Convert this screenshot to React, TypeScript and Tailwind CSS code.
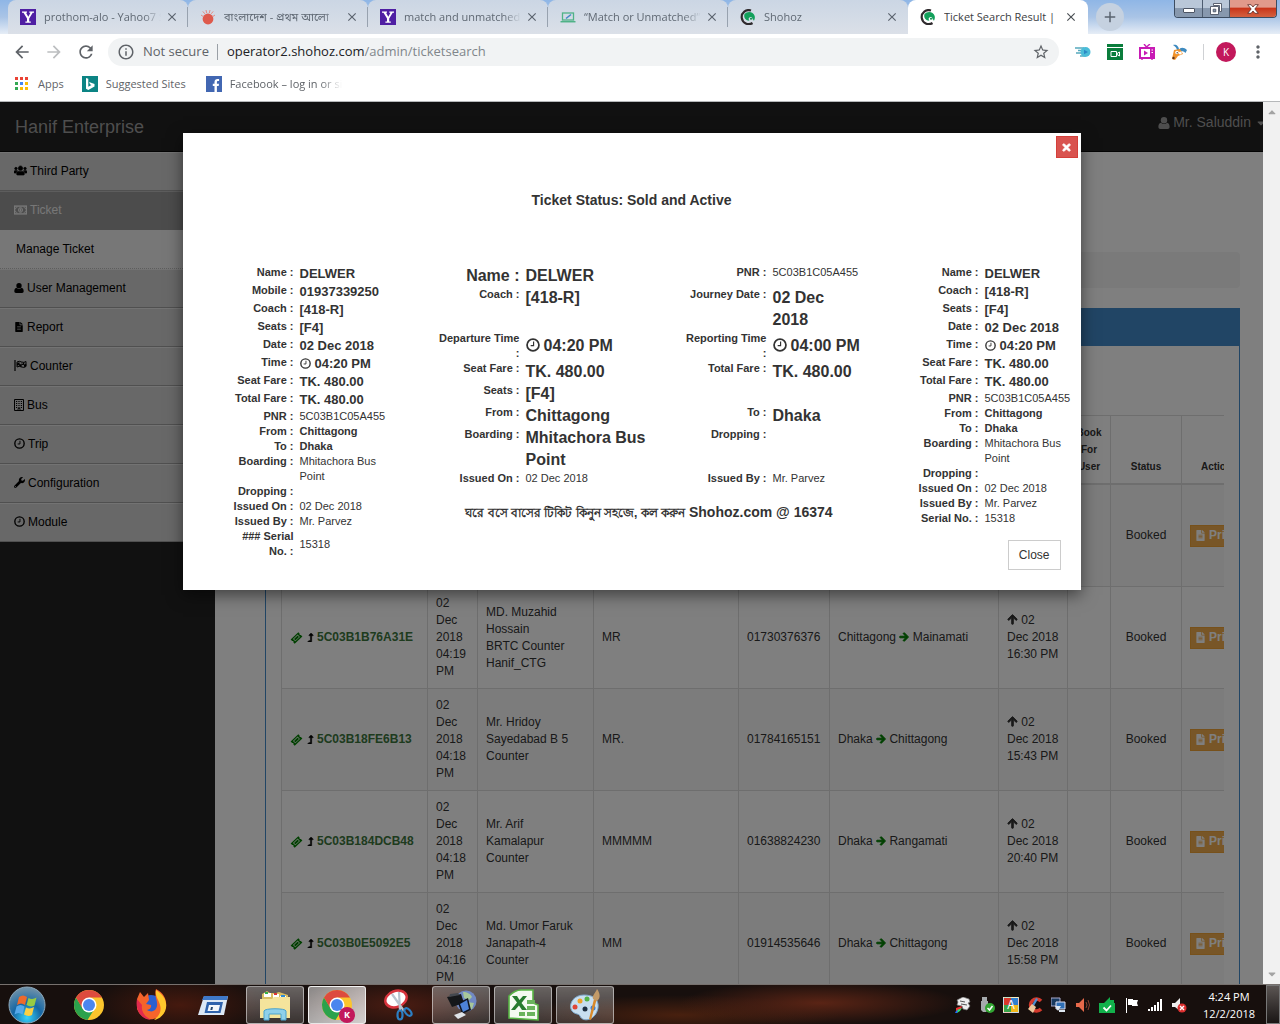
import type { ReactNode } from "react";
import {
  FaArrowRight,
  FaArrowUp,
  FaCaretDown,
  FaCaretUp,
  FaFileAlt,
  FaLevelUpAlt,
  FaTimes,
  FaUsers,
  FaWrench,
} from "react-icons/fa";
import {
  MdAdd,
  MdArrowBack,
  MdArrowForward,
  MdClose,
  MdInfoOutline,
  MdMoreVert,
  MdRefresh,
  MdStarBorder,
} from "react-icons/md";

/* ---------- Browser chrome ---------- */

function YahooIcon() {
  return (
    <svg viewBox="0 0 16 16" className="h-4 w-4">
      <path d="M0 0h16v16H0z" fill="#4f1fa3" />
      <path d="M2 2.500h5v1.200H6l2.300 4 2.200-4H9.300V2.500H14v1.200h-1.300L9.200 9.400v3.100h1.600v1.200H5.400v-1.200H7V9.400L3.500 3.700H2z" fill="#fff" />
    </svg>
  );
}

function AloIcon() {
  return (
    <svg viewBox="0 0 16 16" className="h-4 w-4">
      <circle cx="8" cy="10" r="5.4" fill="#de5a4c" />
      <path d="M1 6l2 1.4M2.8 2.4l2 2.4M6 1l.7 3M10 1l-.7 3M13.2 2.4l-2 2.4M15 6l-2 1.4" stroke="#e58a80" strokeWidth="1" />
    </svg>
  );
}

function LaptopIcon() {
  return (
    <svg viewBox="0 0 16 16" className="h-4 w-4" fill="none">
      <rect x="2.5" y="4" width="11" height="7" stroke="#4fb287" strokeWidth="1.3" />
      <path d="M0.5 12.7h15" stroke="#4fb287" strokeWidth="1.5" />
      <path d="M6 9.5L11 5.5" stroke="#4488c8" strokeWidth="1.6" />
    </svg>
  );
}

function ShohozIcon() {
  return (
    <svg viewBox="0 0 16 16" className="h-4 w-4" fill="none">
      <path d="M11 1.500A7 7 0 1 0 12.500 14" stroke="#2f2a2d" strokeWidth="2.200" />
      <path d="M4.500 5C7 2 13.200 2 14.700 7c.5 2-.2 3.800-.8 4.800-.4-1-.8-1.600-1.500-1.600.2-1.400-1-2.400-2.400-2-1.500.3-1.800 1.800-.6 3.500C6 11.700 3.200 8.500 4.500 5z" fill="#12a05b" />
      <circle cx="11" cy="9.800" r="1" fill="#0d8a4c" />
    </svg>
  );
}

const tabs: { title: string; icon: ReactNode }[] = [
  { title: "prothom-alo - Yahoo7 Search", icon: <YahooIcon /> },
  { title: "বাংলাদেশ - প্রথম আলো", icon: <AloIcon /> },
  { title: "match and unmatched", icon: <YahooIcon /> },
  { title: "“Match or Unmatched”", icon: <LaptopIcon /> },
  { title: "Shohoz", icon: <ShohozIcon /> },
];

function TabStrip() {
  return (
    <div className="relative flex h-[34px] bg-linear-to-b from-[#8fb6e6] via-[#a9c4e6] to-[#e6edf6] pl-2">
      {tabs.map((tab, i) => (
        <div
          key={i}
          className="flex h-full w-[180px] shrink items-center rounded-t-lg bg-linear-to-b from-[#cbd6e4] to-[#dbe0e8] pl-3"
        >
          <span className="shrink-0">{tab.icon}</span>
          <span className="ml-2 w-[117px] overflow-hidden mask-r-from-85% text-[11px] leading-5 whitespace-nowrap text-[#5f6873]">
            {tab.title}
          </span>
          <button aria-label="Close tab" className="ml-1 text-[#5b636e]">
            <MdClose size={14} />
          </button>
          {i < 4 && <span className="ml-auto h-5 w-px bg-[#98a2af]" />}
        </div>
      ))}
      <div className="flex h-full w-[180px] items-center rounded-t-lg bg-white pl-3">
        <ShohozIcon />
        <span className="ml-2 w-[116px] overflow-hidden text-[11px] leading-5 whitespace-nowrap text-[#3c4043]">
          Ticket Search Result |
        </span>
        <button aria-label="Close tab" className="ml-1 text-[#4a4f54]">
          <MdClose size={14} />
        </button>
      </div>
      <button
        aria-label="New tab"
        className="mt-[3px] ml-2 flex h-7 w-7 items-center justify-center rounded-full bg-[#c5d1e0] text-[#59636f]"
      >
        <MdAdd size={18} />
      </button>
      <div className="absolute top-0 right-[3px] flex h-[18px] overflow-hidden rounded-b border border-t-0 border-[#3c4c61] text-white">
        <button aria-label="Minimize" className="flex w-7 items-center justify-center border-r border-[#4d5c70] bg-linear-to-b from-[#b9c7d8] from-45% to-[#8798ae] to-50%">
          <span className="mt-[3px] h-[5px] w-3 rounded-[1px] border border-[#4d5564] bg-white" />
        </button>
        <button aria-label="Restore" className="flex w-[27px] items-center justify-center border-r border-[#4d5c70] bg-linear-to-b from-[#b9c7d8] from-45% to-[#8798ae] to-50%">
          <svg viewBox="0 0 12 12" className="h-3 w-3" fill="#fff" stroke="#4d5564" strokeWidth=".9">
            <path d="M3.500 .5h8v8h-2v-6h-6z" />
            <path d="M.5 3.500h8v8h-8zM3.200 6.200v2.600h2.600V6.200z" fillRule="evenodd" />
          </svg>
        </button>
        <button aria-label="Close window" className="flex w-[46px] items-center justify-center bg-linear-to-b from-[#e19a8b] from-40% via-[#c9351a] via-50% to-[#d4603f]">
          <svg viewBox="0 0 12 10" className="h-[10px] w-3" fill="#fff" stroke="#5a2a26" strokeWidth=".8">
            <path d="M.7.7h3.400L6 3l1.900-2.300h3.400L7.800 5l3.500 4.300H7.900L6 7 4.100 9.300H.7L4.200 5z" />
          </svg>
        </button>
      </div>
    </div>
  );
}

function Toolbar() {
  return (
    <div className="flex h-9 items-center bg-white pr-3 pl-3 text-[#5f6368]">
      <button aria-label="Back" className="mr-3"><MdArrowBack size={20} /></button>
      <button aria-label="Forward" className="mr-3 text-[#bcbec0]"><MdArrowForward size={20} /></button>
      <button aria-label="Reload" className="mr-3"><MdRefresh size={20} /></button>
      <div className="flex h-7 flex-1 items-center rounded-full bg-[#f1f3f4] pr-[9px] pl-[9px]">
        <MdInfoOutline size={18} />
        <span className="ml-2 text-[13px] whitespace-nowrap">Not secure</span>
        <span className="mr-[9px] ml-2 h-4 w-px bg-[#9aa0a6]" />
        <div className="flex-1 text-[13px] whitespace-nowrap text-[#80868b]">
          <span className="text-[#202124]">operator2.shohoz.com</span>/admin/ticketsearch
        </div>
        <button aria-label="Bookmark this page"><MdStarBorder size={18} /></button>
      </div>
      <svg viewBox="0 0 16 16" className="ml-4 h-4 w-4" fill="none">
        <path d="M0 4h9M3 6.500h6M1 9h8M5 12h5" stroke="#55a9bd" strokeWidth="1.300" />
        <circle cx="10.500" cy="8" r="5" fill="#4bbcd8" />
        <path d="M9 5.800v4.400L13 8z" fill="#2c89c5" />
      </svg>
      <svg viewBox="0 0 16 16" className="ml-4 h-4 w-4">
        <path d="M0 0h16v3H0zM0 4h16v12H0z" fill="#0a7d3c" />
        <path d="M4 7.500h5.500v5H4zM10 9.500l2.500-1.500v4L10 10.500z" fill="none" stroke="#fff" />
      </svg>
      <svg viewBox="0 0 16 16" className="ml-4 h-4 w-4" fill="none">
        <path d="M5 0l2.500 3L11 0M3 14.500v1.500M13 14.500v1.500" stroke="#c81bb5" strokeWidth="1.400" />
        <rect x="1" y="4" width="14" height="10" stroke="#c81bb5" strokeWidth="2" />
        <path d="M11 4h4v10h-4z" fill="#c81bb5" />
        <path d="M5 6.500v5L9 9z" fill="#c81bb5" />
        <path d="M12.500 6h1.500M12.500 8.500h1.500" stroke="#fff" />
      </svg>
      <svg viewBox="0 0 16 16" className="ml-4 h-4 w-4">
        <path d="M2 1c3-1 6 1 6 5L6 7C6 4 4.500 2.500 2 1zM8 6c1-3 5-3 8 0l-1.500 3C13 7 10 7 8 7z" fill="#3d8ac0" />
        <path d="M3 6l6-1 3 5-5 2-3 4-3-1z" fill="#f0922b" />
        <circle cx="6" cy="8.500" r="1.800" fill="#fff" />
        <circle cx="9.300" cy="9" r="1.500" fill="#fff" />
        <circle cx="6.200" cy="8.700" r=".7" fill="#333" />
        <circle cx="2.500" cy="14" r="1.200" fill="#5d3521" />
      </svg>
      <span className="ml-4 h-4 w-px bg-[#cfd1d4]" />
      <button className="ml-3 flex h-5 w-5 items-center justify-center rounded-full bg-[#c2185b] text-[10px] text-white">K</button>
      <button aria-label="Menu" className="ml-3"><MdMoreVert size={20} /></button>
    </div>
  );
}

const appDots = [
  "bg-[#ea4335]", "bg-[#ea4335]", "bg-[#ea4335]",
  "bg-[#34a853]", "bg-[#4285f4]", "bg-[#fbbc05]",
  "bg-[#34a853]", "bg-[#fbbc05]", "bg-[#fbbc05]",
];

function BookmarksBar() {
  return (
    <nav className="flex h-8 items-center gap-[18px] border-b border-[#b6b8ba] bg-white pb-1 pl-[15px] text-[11px] leading-5 whitespace-nowrap text-[#5f6368]">
      <a href="#apps" className="flex items-center">
        <span className="mr-[10px] grid grid-cols-3 gap-[2px]">
          {appDots.map((dot, i) => <span key={i} className={`h-[3px] w-[3px] ${dot}`} />)}
        </span>
        Apps
      </a>
      <a href="#suggested" className="flex items-center">
        <svg viewBox="0 0 16 16" className="mr-2 h-4 w-4">
          <path d="M0 0h16v16H0z" fill="#0c8484" />
          <path d="M4 2l2.300.8v8L9.500 9 8 8.200 7.100 6l5.400 2v2.500L6.300 14 4 12.700z" fill="#fff" />
        </svg>
        Suggested Sites
      </a>
      <a href="#facebook" className="ml-0.5 flex items-center">
        <svg viewBox="0 0 16 16" className="mr-2 h-4 w-4">
          <path d="M0 0h16v16H0z" fill="#4267b2" />
          <path d="M8.500 16V10H6.800V7.700h1.700V6c0-2 1.200-3.100 3-3.100.8 0 1.600.1 1.600.1v2h-1c-.9 0-1.200.6-1.200 1.200v1.500H13l-.3 2.300h-1.800v6z" fill="#fff" />
        </svg>
        <span className="w-[112px] overflow-hidden mask-r-from-80%">Facebook – log in or sign up</span>
      </a>
    </nav>
  );
}

/* ---------- Admin page ---------- */

function PersonIcon({ className }: { className: string }) {
  return (
    <svg viewBox="0 0 12 12" fill="currentColor" className={className}>
      <circle cx="6" cy="3.200" r="3.200" />
      <path d="M3 5.800C1 6.200.4 8 .4 10c0 1.300.8 2 1.900 2h7.400c1.100 0 1.900-.7 1.900-2 0-2-.6-3.800-2.600-4.200C8.200 6.700 7.200 7 6 7s-2.200-.3-3-1.200z" />
    </svg>
  );
}

function MoneyIcon() {
  return (
    <svg viewBox="0 0 13 10" className="h-[10px] w-[13px]" fill="none" stroke="currentColor">
      <rect x=".6" y="1.100" width="11.800" height="7.800" strokeWidth="1.400" />
      <path d="M1 3.500C2.200 3.500 3 2.700 3 1.500M10 1.500c0 1.200.8 2 2 2M1 6.500c1.200 0 2 .8 2 2M10 8.500c0-1.200.8-2 2-2" />
      <ellipse cx="6.500" cy="5" rx="2" ry="2.400" fill="currentColor" fillOpacity=".4" />
      <path d="M6.500 3.500v3" />
    </svg>
  );
}

function ClockIcon({ className }: { className: string }) {
  return (
    <svg viewBox="0 0 12 12" fill="none" stroke="currentColor" className={className}>
      <circle cx="6" cy="6" r="5.100" strokeWidth="1.500" />
      <path d="M6.500 3v3.500H4" />
    </svg>
  );
}

function FlagIcon() {
  return (
    <svg viewBox="0 0 13 11" className="h-[11px] w-[13px]" fill="none" stroke="currentColor">
      <path d="M1 0v11" strokeWidth="1.200" />
      <path d="M3 2q2.300-1.400 4.700 0 2.300 1 4.300-.5v5q-2 1.500-4.300.5Q5.300 5.600 3 7z" />
      <path d="M3 3.500l2.300-1v2L3 5.500M7.700 2v2.500l-2.400-.2V6l2.400.8M10 2.300v2.400l-2.300-.2M10 4.700L12 4v2l-2 1" fill="currentColor" strokeWidth=".4" />
    </svg>
  );
}

function BuildingIcon() {
  return (
    <svg viewBox="0 0 10 12" className="h-3 w-[10px]" fill="none" stroke="currentColor">
      <path d="M.5.5h9v11h-9z" />
      <path d="M2 2.500h6M2 4.500h6M2 6.500h6M2 8.500h6" strokeDasharray="1.200 1.200" />
      <path d="M4 11V9.500h2V11" strokeWidth=".8" />
    </svg>
  );
}

function TicketIcon() {
  return (
    <svg viewBox="0 0 13 12" className="mr-[3px] h-3 w-[13px] text-[#008000]" fill="currentColor">
      <path d="M8.300.3l1.300 1.300c-.5.900.300 1.800 1.300 1.300l1.500 1.500-7.700 7.300-1.300-1.300c.5-.9-.4-1.800-1.300-1.300L.6 7.600zM7.600 2.600L3 7l2.300 2.300L9.900 4.900z" fillRule="evenodd" />
      <path d="M7.600 3.500L4 7l1.400 1.400L9 4.900z" />
    </svg>
  );
}

const menu: { label: string; icon?: ReactNode; active?: boolean }[] = [
  { label: "Third Party", icon: <FaUsers size={13} stroke="currentColor" strokeWidth={30} /> },
  { label: "Ticket", icon: <MoneyIcon />, active: true },
  { label: "Manage Ticket" },
  { label: "User Management", icon: <PersonIcon className="h-[10px] w-[10px]" /> },
  { label: "Report", icon: <FaFileAlt size={10} /> },
  { label: "Counter", icon: <FlagIcon /> },
  { label: "Bus", icon: <BuildingIcon /> },
  { label: "Trip", icon: <ClockIcon className="h-[11px] w-[11px]" /> },
  { label: "Configuration", icon: <FaWrench size={11} /> },
  { label: "Module", icon: <ClockIcon className="h-[11px] w-[11px]" /> },
];

function Sidebar() {
  return (
    <aside className="w-[215px] shrink-0 text-[12px]">
      {menu.map((item) =>
        item.icon ? (
          <a
            key={item.label}
            href="#menu"
            className={
              item.active
                ? "flex h-[39px] items-center gap-[3px] border-t border-[#bbb] bg-[#999] pb-0.5 pl-[14px] text-[#eee]"
                : "flex h-[39px] items-center gap-[3px] border-t border-b border-t-[#e6e6e6] border-b-[#a0a0a0] bg-[#d0d0d0] pb-0.5 pl-[14px] text-black"
            }
          >
            {item.icon}
            {item.label}
          </a>
        ) : (
          <a
            key={item.label}
            href="#manage"
            className="flex h-[39px] items-center border-b border-dotted border-[#bbb] bg-[#efefef] pl-4 text-black"
          >
            {item.label}
          </a>
        ),
      )}
    </aside>
  );
}

type Booking = {
  pnr: string;
  time: string;
  by: string[];
  name: string;
  phone: string;
  from: string;
  to: string;
  departs: string;
};

const bookings: Booking[] = [
  { pnr: "5C03B1C05A455", time: "04:20", by: ["Mr. Parvez"], name: "DELWER", phone: "01937339250", from: "Chittagong", to: "Dhaka", departs: "16:20" },
  { pnr: "5C03B1B76A31E", time: "04:19", by: ["MD. Muzahid", "Hossain", "BRTC Counter", "Hanif_CTG"], name: "MR", phone: "01730376376", from: "Chittagong", to: "Mainamati", departs: "16:30" },
  { pnr: "5C03B18FE6B13", time: "04:18", by: ["Mr. Hridoy", "Sayedabad B 5", "Counter"], name: "MR.", phone: "01784165151", from: "Dhaka", to: "Chittagong", departs: "15:43" },
  { pnr: "5C03B184DCB48", time: "04:18", by: ["Mr. Arif", "Kamalapur", "Counter"], name: "MMMMM", phone: "01638824230", from: "Dhaka", to: "Rangamati", departs: "20:40" },
  { pnr: "5C03B0E5092E5", time: "04:16", by: ["Md. Umor Faruk", "Janapath-4", "Counter"], name: "MM", phone: "01914535646", from: "Dhaka", to: "Chittagong", departs: "15:58" },
];

const cell = "border border-[#ddd] p-2 align-middle";

function BookingTable() {
  return (
    <div className="overflow-hidden">
      <table className="w-[971px] table-fixed border-collapse text-[12px] leading-[17px] text-[#333]">
        <colgroup>
          <col className="w-[146px]" />
          <col className="w-[50px]" />
          <col className="w-[116px]" />
          <col className="w-[145px]" />
          <col className="w-[91px]" />
          <col className="w-[169px]" />
          <col className="w-[69px]" />
          <col className="w-[43px]" />
          <col className="w-[71px]" />
          <col />
        </colgroup>
        <thead>
          <tr className="text-[10px]">
            {["PNR", "Issue Date", "Issued By", "Passenger", "Mobile", "Route", "Departure", "Book For User", "Status", "Action"].map((h) => (
              <th key={h} className="border border-b-2 border-[#ddd] px-1 py-2 text-center align-bottom">
                {h}
              </th>
            ))}
          </tr>
        </thead>
        <tbody>
          {bookings.map((b) => (
            <tr key={b.pnr} className="h-[102px] odd:bg-[#f9f9f9]">
              <td className={cell}>
                <a href="#ticket" className="flex items-center font-bold text-[#3c763d]">
                  <TicketIcon />
                  <FaLevelUpAlt size={9} stroke="currentColor" strokeWidth={20} className="text-black" />
                  <span className="ml-0.5">{b.pnr}</span>
                </a>
              </td>
              <td className={cell}>02 Dec 2018 {b.time} PM</td>
              <td className={cell}>
                {b.by.map((line) => <div key={line} className="whitespace-nowrap">{line}</div>)}
              </td>
              <td className={cell}>{b.name}</td>
              <td className={cell}>{b.phone}</td>
              <td className={cell}>
                {b.from} <FaArrowRight size={10} stroke="currentColor" strokeWidth={50} className="inline overflow-visible align-[-1px] text-[#008000]" /> {b.to}
              </td>
              <td className={`${cell} whitespace-nowrap`}>
                <FaArrowUp size={11} stroke="currentColor" strokeWidth={40} className="inline overflow-visible align-[-1px]" /> 02
                <br />
                Dec 2018
                <br />
                {b.departs} PM
              </td>
              <td className={cell} />
              <td className={`${cell} text-center`}>Booked</td>
              <td className={cell}>
                <button className="flex h-[22px] items-center gap-[3px] border border-[#eea236] bg-[#f0ad4e] px-1 font-bold text-white">
                  <FaFileAlt size={11} />
                  Print
                </button>
              </td>
            </tr>
          ))}
        </tbody>
      </table>
    </div>
  );
}

function AdminPage() {
  return (
    <div className="absolute inset-0 flex flex-col overflow-hidden bg-[#222]">
      <header className="flex h-[50px] shrink-0 items-center justify-between border-b border-[#080808] pl-[15px] text-[#9d9d9d]">
        <span className="pt-0.5 text-[18px]">Hanif Enterprise</span>
        <a href="#user" className="-mr-1 flex items-center pb-2 text-[14px]">
          <PersonIcon className="mr-[3px] h-3 w-3" />
          Mr. Saluddin
          <FaCaretDown size={12} className="ml-1" />
        </a>
      </header>
      <div className="flex min-h-0 flex-1">
        <Sidebar />
        <main className="min-w-0 flex-1 overflow-hidden bg-white pt-[100px] pr-[23px] pl-[50px]">
          <div className="h-9 rounded bg-[#f5f5f5]" />
          <section className="mt-5 border border-[#428bca]">
            <div className="h-[37px] bg-[#428bca]" />
            <div className="px-[15px] pt-[69px] pb-[15px]">
              <BookingTable />
            </div>
          </section>
        </main>
      </div>
    </div>
  );
}

/* ---------- Ticket dialog ---------- */

type Size = "sm" | "smBold" | "md";
type Row = { label: string; value: string; size: Size; clock?: boolean };

const valueStyle: Record<Size, string> = {
  sm: "text-[11px] leading-[15px]",
  smBold: "text-[11px] leading-[15px] font-bold",
  md: "text-[13px] leading-[18px] font-bold",
};

const fares: Row[] = [
  { label: "Date", value: "02 Dec 2018", size: "md" },
  { label: "Time", value: "04:20 PM", size: "md", clock: true },
  { label: "Seat Fare", value: "TK. 480.00", size: "md" },
  { label: "Total Fare", value: "TK. 480.00", size: "md" },
  { label: "PNR", value: "5C03B1C05A455", size: "sm" },
  { label: "From", value: "Chittagong", size: "smBold" },
  { label: "To", value: "Dhaka", size: "smBold" },
  { label: "Boarding", value: "Mhitachora Bus Point", size: "sm" },
  { label: "Dropping", value: "", size: "sm" },
  { label: "Issued On", value: "02 Dec 2018", size: "sm" },
  { label: "Issued By", value: "Mr. Parvez", size: "sm" },
];

const leftRows: Row[] = [
  { label: "Name", value: "DELWER", size: "md" },
  { label: "Mobile", value: "01937339250", size: "md" },
  { label: "Coach", value: "[418-R]", size: "md" },
  { label: "Seats", value: "[F4]", size: "md" },
  ...fares,
  { label: "### Serial No.", value: "15318", size: "sm" },
];

const rightRows: Row[] = [
  { label: "Name", value: "DELWER", size: "md" },
  { label: "Coach", value: "[418-R]", size: "md" },
  { label: "Seats", value: "[F4]", size: "md" },
  ...fares,
  { label: "Serial No.", value: "15318", size: "sm" },
];

const labelStyle = "pr-[6px] text-right align-top text-[11px] leading-[15px] font-bold";

function Stub({ rows }: { rows: Row[] }) {
  return (
    <table className="w-[154px] table-fixed border-collapse">
      <colgroup>
        <col className="w-[68px]" />
        <col />
      </colgroup>
      <tbody>
        {rows.map((row) => (
          <tr key={row.label}>
            <th scope="row" className={labelStyle}>{row.label} :</th>
            <td className={`align-middle ${valueStyle[row.size]}`}>
              {row.clock && <ClockIcon className="mr-1 inline h-[11px] w-[11px] align-[-1px]" />}
              {row.value}
            </td>
          </tr>
        ))}
      </tbody>
    </table>
  );
}

type Field = { label: string; value: string; small?: boolean; clock?: boolean; bigLabel?: boolean };

const middleRows: [Field, Field | null][] = [
  [{ label: "Name", value: "DELWER", bigLabel: true }, { label: "PNR", value: "5C03B1C05A455", small: true }],
  [{ label: "Coach", value: "[418-R]" }, { label: "Journey Date", value: "02 Dec 2018" }],
  [{ label: "Departure Time", value: "04:20 PM", clock: true }, { label: "Reporting Time", value: "04:00 PM", clock: true }],
  [{ label: "Seat Fare", value: "TK. 480.00" }, { label: "Total Fare", value: "TK. 480.00" }],
  [{ label: "Seats", value: "[F4]" }, null],
  [{ label: "From", value: "Chittagong" }, { label: "To", value: "Dhaka" }],
  [{ label: "Boarding", value: "Mhitachora Bus Point" }, { label: "Dropping", value: "" }],
  [{ label: "Issued On", value: "02 Dec 2018", small: true }, { label: "Issued By", value: "Mr. Parvez", small: true }],
];

function FieldCells({ field }: { field: Field | null }) {
  if (!field) return <td colSpan={2} />;
  return (
    <>
      <th
        scope="row"
        className={
          field.bigLabel
            ? "pr-[6px] text-right align-top text-[16px] leading-[22px] font-bold"
            : labelStyle
        }
      >
        {field.label} :
      </th>
      <td
        className={
          field.small
            ? "align-top text-[11px] leading-[15px]"
            : field.clock
              ? "align-middle text-[16px] leading-[22px] font-bold whitespace-nowrap"
              : "align-top text-[16px] leading-[22px] font-bold"
        }
      >
        {field.clock && <ClockIcon className="mr-1 inline h-[14px] w-[14px] align-[-1px]" />}
        {field.value}
      </td>
    </>
  );
}

function TicketDialog() {
  return (
    <div
      role="dialog"
      aria-label="Ticket status"
      className="relative w-full max-w-[898px] self-start bg-white pt-[58px] pr-[10px] pb-5 pl-[49px] text-[#333] shadow-[0_5px_15px_rgba(0,0,0,0.5)]"
    >
      <button
        aria-label="Close dialog"
        className="absolute top-[3px] right-[3px] flex h-[22px] w-[22px] items-center justify-center border border-[#d43f3a] bg-[#d9534f] text-white"
      >
        <FaTimes size={11} stroke="currentColor" strokeWidth={40} className="overflow-visible" />
      </button>
      <h1 className="-ml-[39px] text-center text-[14px] leading-[18px] font-bold">Ticket Status: Sold and Active</h1>
      <div className="mt-14 flex gap-[51px]">
        <div>
          <Stub rows={leftRows} />
        </div>
        <div>
          <table className="w-[425px] table-fixed border-collapse">
            <colgroup>
              <col className="w-[89px]" />
              <col className="w-[158px]" />
              <col className="w-[89px]" />
              <col />
            </colgroup>
            <tbody>
              {middleRows.map(([a, b]) => (
                <tr key={a.label}>
                  <FieldCells field={a} />
                  <FieldCells field={b} />
                </tr>
              ))}
            </tbody>
          </table>
          <p className="mt-4 text-center text-[14px] leading-5 font-bold">
            <span className="text-[12px]">ঘরে বসে বাসের টিকিট কিনুন সহজে, কল করুন</span> Shohoz.com @ 16374
          </p>
        </div>
        <div className="ml-auto flex flex-col">
          <Stub rows={rightRows} />
          <button className="mt-[14px] mr-[10px] h-[30px] self-end border border-[#ccc] bg-white px-[10px] text-[12px]">
            Close
          </button>
        </div>
      </div>
    </div>
  );
}

/* ---------- Windows taskbar ---------- */

function ChromeIcon({ badge }: { badge?: boolean }) {
  return (
    <span className="relative block">
      <svg viewBox="0 0 32 32" className="h-8 w-8">
        <circle cx="16" cy="16" r="15" fill="#fbc52d" />
        <path d="M3 8.500a15 15 0 0 0 11.500 22.400L21.500 20 16 16 9.500 19z" fill="#2ba24c" />
        <path d="M16 8.500h13A15 15 0 0 0 3 8.500l6.500 11z" fill="#dd4b3e" />
        <circle cx="16" cy="16" r="7.500" fill="#fff" />
        <circle cx="16" cy="16" r="6" fill="#4a86ee" />
      </svg>
      {badge && (
        <span className="absolute -right-[2px] -bottom-[2px] flex h-4 w-4 items-center justify-center rounded-full bg-[#c2185b] text-[9px] font-bold text-white">
          K
        </span>
      )}
    </span>
  );
}

function FirefoxIcon() {
  return (
    <svg viewBox="0 0 32 32" className="h-8 w-8">
      <circle cx="16" cy="17" r="11" fill="#2b5fd0" />
      <path d="M2 10L5 3l4 5 4-4 1 7-3 4 5 1c1 4-4 5-4 5 6 4 11-1 10-7 0-4-3-8-1-14 8 4 11 11 10 18A15 15 0 0 1 2 20z" fill="#f5642b" />
      <path d="M21 1c8 5 11 11 10 18-1 6-6 11-12 12 5-4 8-9 6-15-1-5-5-8-4-15z" fill="#ffc72c" />
      <path d="M2 10c-2 10 3 20 14 21-7-4-10-9-9-15z" fill="#e22a4c" />
    </svg>
  );
}

function RunIcon() {
  return (
    <svg viewBox="0 0 32 32" className="h-8 w-8">
      <path d="M7 7h24l-4 19H1z" fill="#dce8f5" />
      <path d="M7 7h24l-1 4H5z" fill="#3f78c8" />
      <path d="M10 13h16l-2.500 11H7.500z" fill="#2f63ad" />
      <path d="M12 16h11l-1.500 6h-11z" fill="#f4f8fc" />
      <path d="M14 18h2l-.7 3h-2z" fill="#24466f" />
    </svg>
  );
}

function ExplorerIcon() {
  return (
    <svg viewBox="0 0 32 32" className="h-8 w-8">
      <path d="M3 5l5-3 3 2h6l3-1 9 3v22H3z" fill="#d8bd63" />
      <path d="M5 4h7v4H5z" fill="#fff" />
      <path d="M6 3h3v2H6z" fill="#34b24a" />
      <path d="M14 5h6v4h-6z" fill="#fff" />
      <path d="M15 4h3v2h-3z" fill="#d33" />
      <path d="M21 7h6v4h-6z" fill="#fff" />
      <path d="M22 6h4v2h-4z" fill="#2c8bd6" />
      <path d="M1 10h12l2-2h16v21H1z" fill="#f5e49c" />
      <path d="M5 31v-9c0-3 22-3 22 0v9h-5v-6H10v6z" fill="#8fd0ea" stroke="#4aa3cd" />
    </svg>
  );
}

function SnipIcon() {
  return (
    <svg viewBox="0 0 32 32" className="h-8 w-8" fill="none">
      <ellipse cx="13" cy="10" rx="11" ry="8" fill="#fff" stroke="#d8343d" strokeWidth="2.500" transform="rotate(-20 13 10)" />
      <path d="M9 5l12 17M16 3l1 19" stroke="#b9c4cf" strokeWidth="2.200" />
      <ellipse cx="17" cy="26" rx="2.500" ry="4.500" stroke="#2c7fc4" strokeWidth="2.200" />
      <ellipse cx="25" cy="23" rx="2.500" ry="4.500" stroke="#2c7fc4" strokeWidth="2.200" transform="rotate(-40 25 23)" />
    </svg>
  );
}

function NetworkIcon() {
  return (
    <svg viewBox="0 0 32 32" className="h-8 w-8">
      <circle cx="21" cy="12" r="10.500" fill="#7189c4" />
      <path d="M18 3c4 0 8 2 9 5l-3 3-5-2zM22 13l7 1-2 6-4 1z" fill="#a8c79a" />
      <path d="M2 8l14-3 3 9-12 4z" fill="#15171a" />
      <path d="M4 8l11-2-2-2-8 1z" fill="#44484f" />
      <path d="M13 14l10-5 3 12-9 4z" fill="#101520" />
      <path d="M15 15l7-4 2 9-6 3z" fill="#4d82d8" />
      <path d="M9 26l8-3 4 3-8 4z" fill="#dfe3e8" />
    </svg>
  );
}

function ExcelIcon() {
  return (
    <svg viewBox="0 0 32 32" className="h-8 w-8">
      <path d="M2 7q6-6 12-6h12v13l5 2v15l-29-2z" fill="#f4faf0" stroke="#58b544" strokeWidth="1.600" />
      <path d="M20 11h8v4h-8zM20 17h8v4h-8zM20 23h8v4h-8zM12 23h6v4h-6z" fill="#69b35c" />
      <path d="M5 7h5l2.500 4L16 7h4l-5.500 7L20 21h-5l-3-4.500L8 21H4l6-7.500z" fill="#277b2e" />
    </svg>
  );
}

function PaintIcon() {
  return (
    <svg viewBox="0 0 32 32" className="h-8 w-8">
      <path d="M15 6C5 6 0 14 2 20s8 4 9 7 5 5 10 3 9-9 8-15S23 6 15 6z" fill="#c8dff0" stroke="#7ea9cc" />
      <circle cx="11" cy="12" r="2.500" fill="#f1a229" />
      <circle cx="18" cy="10" r="2.500" fill="#54b346" />
      <circle cx="6" cy="18" r="2.500" fill="#df4637" />
      <circle cx="16" cy="20" r="2.500" fill="#1f3144" />
      <circle cx="24" cy="19" r="2.500" fill="#3b7bd1" />
      <path d="M20 30l5-20 2.500 1L22 31z" fill="#d98a2b" />
      <path d="M24 10c-1-4 2-5 4-10 3 4 4 9 0 12z" fill="#c39a68" />
    </svg>
  );
}

const idle = "flex h-[38px] w-[58px] items-center justify-center";
const open = "flex h-[38px] w-[58px] items-center justify-center rounded-[3px] border border-white/50 bg-linear-to-b from-white/35 to-white/15";

const apps: { name: string; icon: ReactNode; style: string }[] = [
  { name: "Chrome", icon: <ChromeIcon />, style: idle },
  { name: "Firefox", icon: <FirefoxIcon />, style: idle },
  { name: "Run", icon: <RunIcon />, style: idle },
  { name: "Explorer", icon: <ExplorerIcon />, style: open },
  {
    name: "Chrome profile",
    icon: <ChromeIcon badge />,
    style: "flex h-[38px] w-[58px] items-center justify-center rounded-[3px] border border-white/80 bg-linear-to-br from-white/50 to-white/80",
  },
  { name: "Snipping Tool", icon: <SnipIcon />, style: idle },
  { name: "Network", icon: <NetworkIcon />, style: open },
  { name: "Excel", icon: <ExcelIcon />, style: open },
  { name: "Paint", icon: <PaintIcon />, style: open },
];

function TrayIcons() {
  const box = "h-4 w-4";
  return (
    <div className="flex items-center gap-2">
      <svg viewBox="0 0 16 16" className={box}>
        <path d="M2 3l6-3 6 2 1 3-2 1 2 3-3 4-4-1-1-3-5-1 1-3z" fill="#eee" stroke="#777" strokeWidth=".7" />
        <path d="M5 4l5 1M6 7l6 1" stroke="#555" />
        <path d="M1 11l6-2-1 3-5 3z" fill="#e33" />
        <path d="M2 13l5-2-2 3-3 2z" fill="#3d6" />
        <path d="M1 14l2-1-1 3H0z" fill="#26f" />
      </svg>
      <svg viewBox="0 0 16 16" className={box}>
        <path d="M3 0h5v4H3zM2 4h7v9l-2 2H4l-2-2z" fill="#a6aaad" />
        <circle cx="11" cy="11" r="5" fill="#32a532" />
        <path d="M8.500 11l2 2 3-4" stroke="#fff" strokeWidth="1.500" fill="none" />
      </svg>
      <span className="grid h-4 w-4 place-items-center border border-white/70 bg-conic-[#2f7fd0_0deg_90deg,#f2b71c_90deg_180deg,#38a349_180deg_270deg,#d8392b_270deg_360deg] text-[12px] leading-none text-white">
        A
      </span>
      <svg viewBox="0 0 16 16" className={box} fill="none">
        <path d="M14 4A6 6 0 1 0 14 12" stroke="#d3392c" strokeWidth="3.500" />
        <path d="M9 1l2 1-4 7-2-1z" fill="#4d8ed0" />
        <path d="M5 7l4 3-3 6-5-4z" fill="#ecc79c" />
      </svg>
      <svg viewBox="0 0 16 16" className={box}>
        <path d="M0 1h9v8H0z" fill="#17395f" stroke="#aac" />
        <path d="M5 5h9v7H5z" fill="#2f6fb6" stroke="#dde" />
        <path d="M4 9l3 5 3-5zM8 13h6v2H8z" fill="#dfe8f1" />
      </svg>
      <svg viewBox="0 0 16 16" className={box} fill="none">
        <path d="M1 6h3l5-5v14l-5-5H1z" fill="#e8694a" />
        <path d="M11 5q2 3 0 6M13 3q3 5 0 10" stroke="#88402f" />
      </svg>
      <svg viewBox="0 0 16 16" className={box} fill="none">
        <path d="M0 6h16v10H0zM5 6l6-6v3h4v3z" fill="#12b14b" />
        <path d="M4.500 10.500l3 3 4.500-5" stroke="#fff" strokeWidth="1.800" />
      </svg>
      <svg viewBox="0 0 16 16" className={box}>
        <path d="M3 1h1v15H3zM5 2h5v1h5l-1 3 1 3H9V8H5z" fill="#fff" />
      </svg>
      <svg viewBox="0 0 16 16" className={box}>
        <path d="M1 12h2v2H1zM4 10h2v4H4zM7 8h2v6H7zM10 5h2v9h-2zM13 2h2v12h-2z" fill="#fff" />
      </svg>
      <svg viewBox="0 0 16 16" className={box}>
        <path d="M1 6h3l5-5v13l-5-4H1z" fill="#eee" />
        <circle cx="11" cy="11" r="4.500" fill="#dc2f2f" />
        <path d="M9 9l4 4M13 9l-4 4" stroke="#fff" strokeWidth="1.400" />
      </svg>
    </div>
  );
}

function Taskbar() {
  return (
    <footer className="flex h-10 shrink-0 items-center border-t border-[#77716e] bg-[#170f0d] bg-[radial-gradient(ellipse_140px_22px_at_820px_18px,#5a2415,transparent),radial-gradient(ellipse_90px_30px_at_180px_20px,#45190e,transparent),radial-gradient(ellipse_160px_20px_at_680px_30px,#48200f,transparent),radial-gradient(ellipse_100px_30px_at_400px_20px,#4a1c12,transparent)]">
      <button aria-label="Start" className="ml-2 flex w-[38px] shrink-0 justify-center">
        <svg viewBox="0 0 38 38" className="h-[38px] w-[38px]">
          <defs>
            <radialGradient id="orb" cx=".5" cy=".85" r=".8">
              <stop offset="0" stopColor="#37d3fa" />
              <stop offset=".5" stopColor="#1567a5" />
              <stop offset="1" stopColor="#6b8fa8" />
            </radialGradient>
          </defs>
          <circle cx="19" cy="19" r="18" fill="url(#orb)" stroke="#8da8ba" />
          <path d="M11 11q4-3 8 0l-2 8q-4-3-8 0z" fill="#ee6a2c" />
          <path d="M20.500 12q4 2 8-.5l-2 8q-4 2-8-.5z" fill="#97cb43" />
          <path d="M8.500 20.500q4-3 8 0l-2 8q-4-3-8 0z" fill="#55a8ea" />
          <path d="M18 21.500q4 2 8-.5l-2 8q-4 2-8-.5z" fill="#fbd044" />
        </svg>
      </button>
      <div className="ml-[14px] flex gap-1">
        {apps.map((app) => (
          <button key={app.name} aria-label={app.name} className={app.style}>
            {app.icon}
          </button>
        ))}
      </div>
      <div className="ml-auto flex items-center">
        <TrayIcons />
        <div className="mr-[5px] ml-[10px] w-[64px] text-center text-[11px] leading-[17px] whitespace-nowrap text-white">
          <div>4:24 PM</div>
          <div>12/2/2018</div>
        </div>
        <button aria-label="Show desktop" className="h-[39px] w-[14px] border border-[#777] bg-linear-to-b from-[#5c5654] to-[#1a1615]" />
      </div>
    </footer>
  );
}

export default function App() {
  return (
    <div className="flex h-screen flex-col overflow-hidden font-['Open_Sans','Noto_Sans_Bengali',sans-serif]">
      <TabStrip />
      <Toolbar />
      <BookmarksBar />
      <div className="flex min-h-0 flex-1">
        <div className="relative min-w-0 flex-1 overflow-hidden font-['Liberation_Sans',Arial,sans-serif]">
          <AdminPage />
          <div className="absolute inset-0 flex justify-center overflow-hidden bg-black/50 pt-[31px]">
            <TicketDialog />
          </div>
        </div>
        <div className="flex w-[17px] flex-col items-center justify-between bg-[#f1f1f1] py-1 text-[#a3a3a3]">
          <FaCaretUp size={12} />
          <FaCaretDown size={12} />
        </div>
      </div>
      <Taskbar />
    </div>
  );
}
